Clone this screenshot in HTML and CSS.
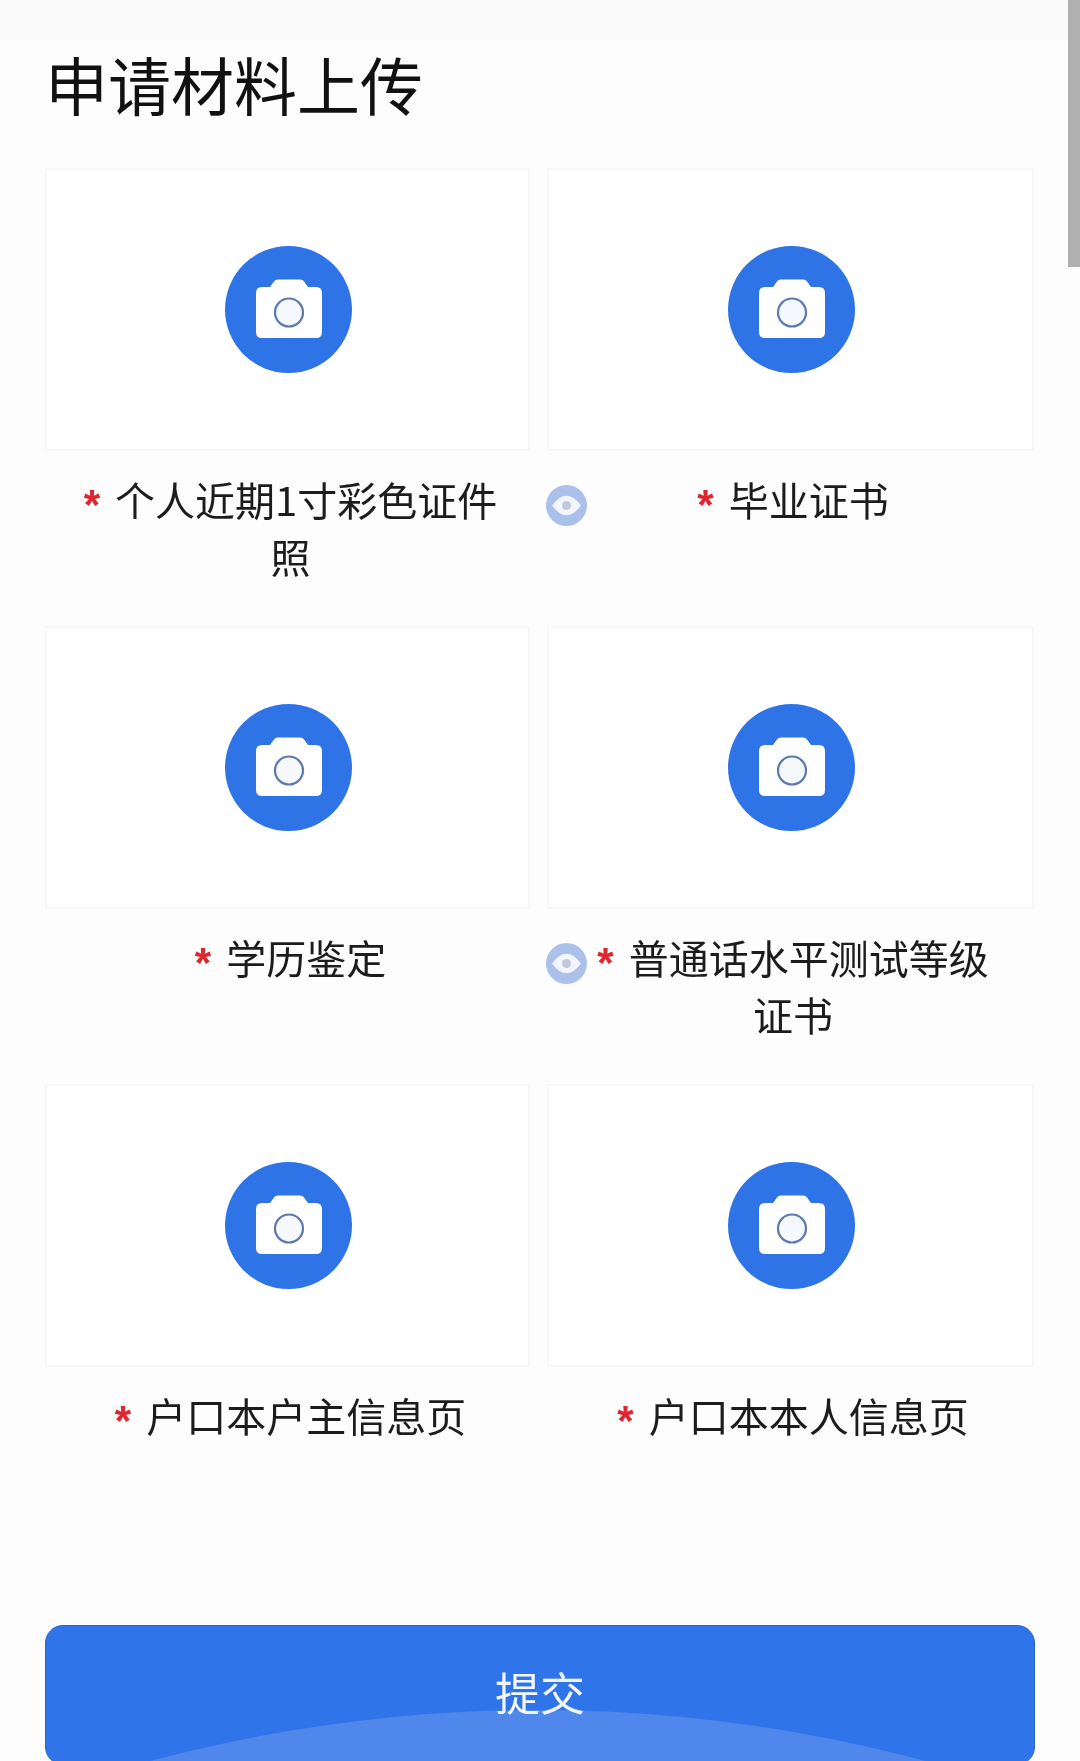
FILE: index.html
```html
<!DOCTYPE html>
<html lang="zh-CN">
<head>
    <meta charset="UTF-8">
    <meta name="viewport" content="width=device-width, initial-scale=1.0">
    <title>申请材料上传</title>
    <link rel="stylesheet" href="styles.css">
</head>
<body>
    <svg class="defs" width="0" height="0">
        <symbol id="camera" viewBox="0 0 66 60">
            <path d="M6 9H14L18 3.500Q19 1.500 22 1.500H44Q47 1.500 48 3.500L52 9H60Q66 9 66 15V54Q66 60 60 60H6Q0 60 0 54V15Q0 9 6 9Z" fill="#fff"/>
            <circle cx="33" cy="34.500" r="14" fill="#f5f8fc" stroke="#5f79ad" stroke-width="2.200"/>
        </symbol>
        <symbol id="eye" viewBox="0 0 41 41">
            <circle cx="20.500" cy="20.500" r="20.500" fill="#abc1eb"/>
            <path d="M6 20.500Q20.500 1 35 20.500Q20.500 40 6 20.500Z" fill="#f2f5fb"/>
            <circle cx="20.500" cy="20.500" r="4.500" fill="#c0c9d8"/>
        </symbol>
    </svg>

    <div class="page">
        <h1 class="title">申请材料上传</h1>

        <div class="upload-grid">
            <div class="upload-item">
                <div class="upload-box"><div class="camera-btn"><svg class="camera-icon"><use href="#camera"/></svg></div></div>
                <p class="upload-label"><span class="star">*</span>个人近期1寸彩色证件照</p>
            </div>
            <div class="upload-item">
                <div class="upload-box"><div class="camera-btn"><svg class="camera-icon"><use href="#camera"/></svg></div></div>
                <svg class="eye-icon"><use href="#eye"/></svg>
                <p class="upload-label label-right"><span class="star">*</span>毕业证书</p>
            </div>
            <div class="upload-item">
                <div class="upload-box"><div class="camera-btn"><svg class="camera-icon"><use href="#camera"/></svg></div></div>
                <p class="upload-label"><span class="star">*</span>学历鉴定</p>
            </div>
            <div class="upload-item">
                <div class="upload-box"><div class="camera-btn"><svg class="camera-icon"><use href="#camera"/></svg></div></div>
                <svg class="eye-icon"><use href="#eye"/></svg>
                <p class="upload-label label-right"><span class="star">*</span>普通话水平测试等级证书</p>
            </div>
            <div class="upload-item">
                <div class="upload-box"><div class="camera-btn"><svg class="camera-icon"><use href="#camera"/></svg></div></div>
                <p class="upload-label"><span class="star">*</span>户口本户主信息页</p>
            </div>
            <div class="upload-item">
                <div class="upload-box"><div class="camera-btn"><svg class="camera-icon"><use href="#camera"/></svg></div></div>
                <p class="upload-label label-right"><span class="star">*</span>户口本本人信息页</p>
            </div>
        </div>

        <button class="submit"><span class="submit-text">提交</span></button>
    </div>

    <div class="scrollbar"></div>
</body>
</html>
```

FILE: styles.css
```css
html, body { margin: 0; height: 1761px; overflow: hidden; }
body { background: #fafafa; font-family: "Noto Sans CJK SC", "Liberation Sans", sans-serif; color: #1a1a1a; position: relative; }
.defs { position: absolute; }

.page { height: 1761px; box-sizing: border-box; padding: 47px 45px 0 45px; background: linear-gradient(#fafafa 40px, #fdfdfd 40px); filter: blur(0.4px); }

.title { margin: 0 0 49px; font-size: 63px; line-height: 72px; font-weight: 400; color: #111; }

/* two columns of upload cells */
.upload-grid { display: grid; grid-template-columns: 485px 487px; column-gap: 17px; grid-auto-rows: 458px; }
.upload-item { position: relative; }

.upload-box { height: 283px; box-sizing: border-box; background: #fff; border: 2px solid #f7f7f7; display: flex; align-items: center; justify-content: center; }
.camera-btn { width: 127px; height: 127px; margin-left: 1px; border-radius: 50%; background: #2f74e6; display: flex; align-items: center; justify-content: center; }
.camera-icon { width: 66px; height: 60px; margin: 0 0 3px 2px; }

.upload-label { margin: 20px 0 0; padding: 0 24px 0 30px; font-size: 40px; line-height: 57px; text-align: center; color: #1c1c1c; }
.label-right { padding: 0 27px 0 32px; }
.star { display: inline-block; margin-right: 15px; font-size: 42px; font-weight: 700; line-height: 1; color: #df2630; font-family: "Liberation Sans", sans-serif; vertical-align: -3px; }

.eye-icon { position: absolute; left: -1px; top: 317px; width: 41px; height: 41px; }

.submit { position: relative; display: flex; align-items: center; justify-content: center; width: 100%; height: 140px; margin-top: 83px; padding: 0 0 8px; box-sizing: border-box; border: 1px solid #2a68c8; border-radius: 18px; background: #2f74e8; overflow: hidden; font-family: inherit; }
.submit::after { content: ""; position: absolute; top: 84px; left: calc(50% - 1498px); width: 2992px; height: 2992px; border-radius: 50%; background: #4f87ea; }
.submit-text { position: relative; z-index: 1; font-size: 45px; color: #f2f6fd; }

.scrollbar { position: absolute; top: 0; right: 0; width: 12px; height: 267px; background: #b0b0b0; }
```
